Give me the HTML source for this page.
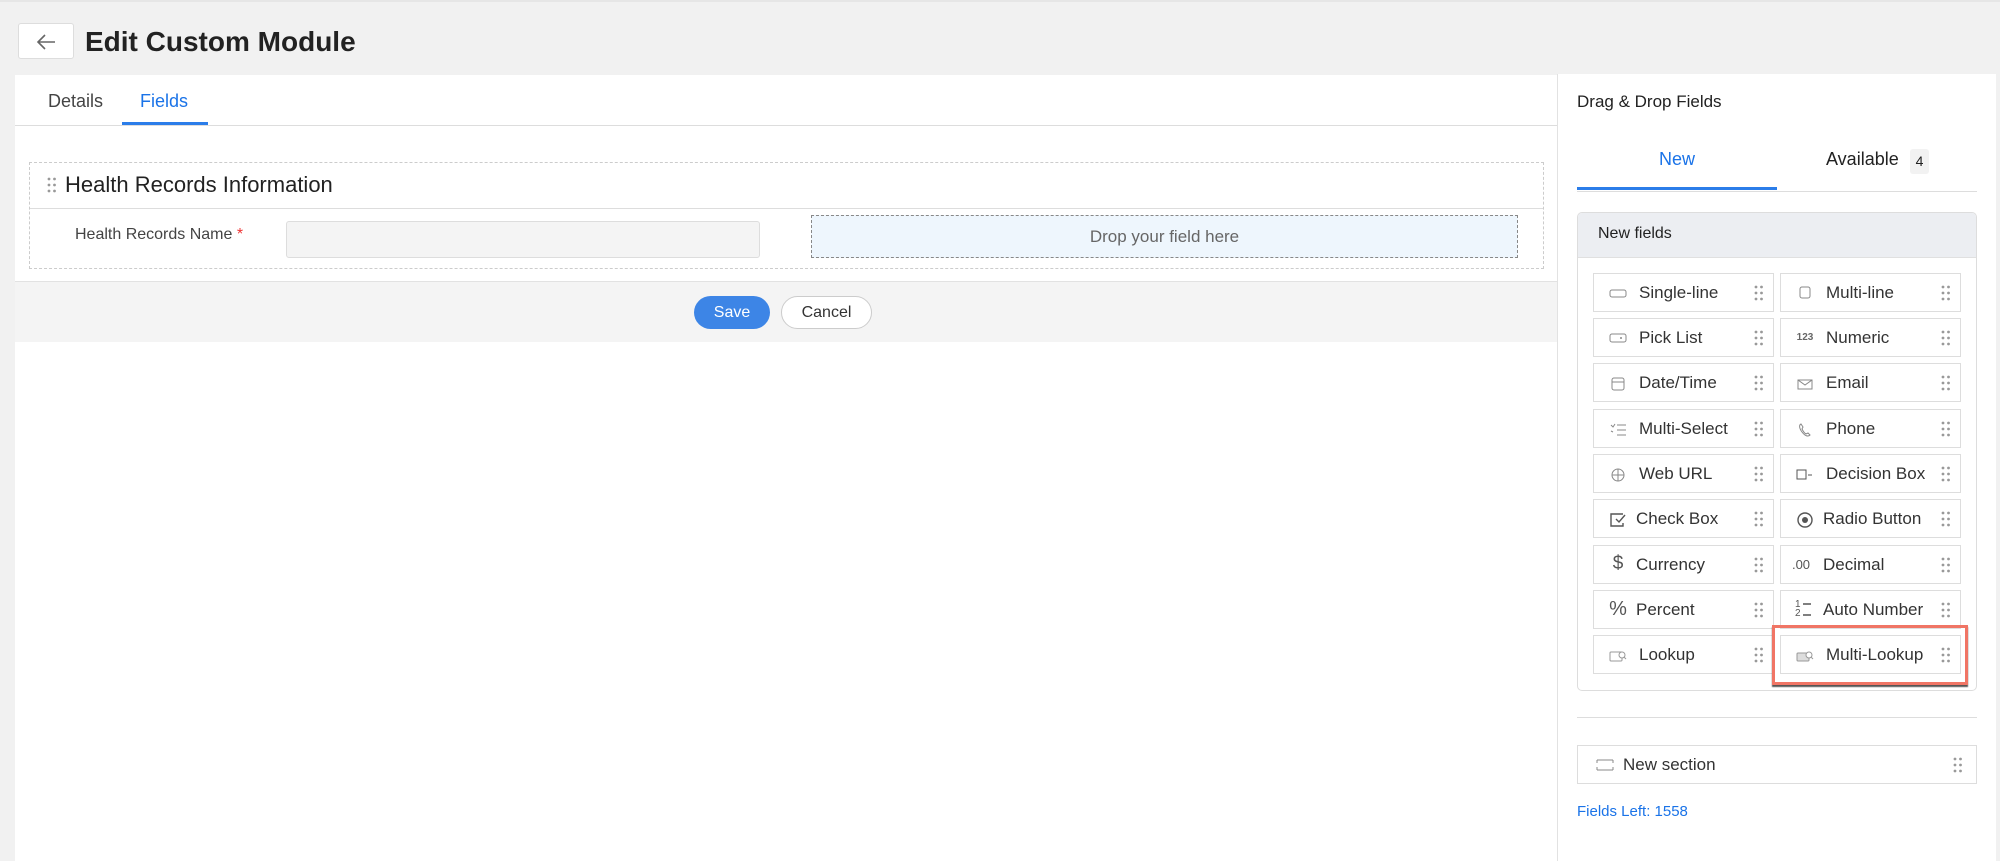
<!DOCTYPE html>
<html><head><meta charset="utf-8"><style>
*{box-sizing:border-box;margin:0;padding:0}
body{width:2000px;height:861px;background:#f1f1f1;font-family:"Liberation Sans",sans-serif;position:relative;overflow:hidden;color:#333}
.a{position:absolute}
.item{position:absolute;width:181px;height:39px;border:1px solid #ddd;background:#fff;font-size:17px;color:#333}
.item .t{position:absolute;left:45px;top:9px;white-space:nowrap}
.item .ic{position:absolute;left:14px;top:10px;width:20px;height:18px;color:#666;font-size:13px;text-align:center}
.dots{position:absolute;width:9px;height:16px}
.item .dots{right:10px;top:11px}
</style></head><body>
<svg width="0" height="0" style="position:absolute"><defs><g id="dd" fill="#999"><circle cx="2" cy="2" r="1.4"/><circle cx="7.5" cy="2" r="1.4"/><circle cx="2" cy="8" r="1.4"/><circle cx="7.5" cy="8" r="1.4"/><circle cx="2" cy="14" r="1.4"/><circle cx="7.5" cy="14" r="1.4"/></g></defs></svg>
<div class="a" style="left:0;top:0;width:2000px;height:2px;background:#e6e6e6"></div>
<div class="a" style="left:18px;top:23px;width:56px;height:36px;background:#fff;border:1px solid #ddd;border-radius:3px">
<svg width="56" height="36" viewBox="0 0 56 36"><path d="M36 18H20M26 11l-7 7 7 7" fill="none" stroke="#666" stroke-width="1.6"/></svg></div>
<div class="a" style="left:85px;top:26px;font-size:28px;font-weight:bold;color:#222">Edit Custom Module</div>

<div class="a" style="left:15px;top:75px;width:1542px;height:786px;background:#fff"></div>
<div class="a" style="left:48px;top:91px;font-size:18px;color:#444">Details</div>
<div class="a" style="left:140px;top:91px;font-size:18px;color:#1a73e8">Fields</div>
<div class="a" style="left:122px;top:122px;width:86px;height:3px;background:#2b7de9"></div>
<div class="a" style="left:15px;top:125px;width:1542px;height:1px;background:#ddd"></div>

<div class="a" style="left:29px;top:162px;width:1515px;height:107px;border:1px dashed #ccc"></div>
<svg class="dots" style="left:47px;top:177px"><use href="#dd"/></svg>
<div class="a" style="left:65px;top:172px;font-size:22px;color:#222">Health Records Information</div>
<div class="a" style="left:30px;top:208px;width:1513px;height:1px;background:#ddd"></div>
<div class="a" style="left:75px;top:226px;font-size:16px;color:#444">Health Records Name <span style="color:#e33">*</span></div>
<div class="a" style="left:286px;top:221px;width:474px;height:37px;background:#f4f4f4;border:1px solid #ddd;border-radius:3px"></div>
<div class="a" style="left:811px;top:215px;width:707px;height:43px;background:#eef6fd;border:1px dashed #888;font-size:17px;color:#666;text-align:center;line-height:41px">Drop your field here</div>

<div class="a" style="left:15px;top:281px;width:1542px;height:61px;background:#f4f4f4;border-top:1px solid #e2e2e2"></div>
<div class="a" style="left:694px;top:296px;width:76px;height:33px;background:#3d85e6;border-radius:17px;color:#fff;font-size:16px;text-align:center;line-height:33px">Save</div>
<div class="a" style="left:781px;top:296px;width:91px;height:33px;background:#fff;border:1px solid #ccc;border-radius:17px;color:#333;font-size:16px;text-align:center;line-height:31px">Cancel</div>

<div class="a" style="left:1557px;top:74px;width:439px;height:787px;background:#fff;border-left:1px solid #e2e2e2"></div>
<div class="a" style="left:1577px;top:92px;font-size:17px;color:#222">Drag &amp; Drop Fields</div>
<div class="a" style="left:1577px;top:149px;width:200px;text-align:center;font-size:18px;color:#1a73e8">New</div>
<div class="a" style="left:1826px;top:149px;font-size:18px;color:#222">Available</div>
<div class="a" style="left:1910px;top:149px;width:19px;height:25px;background:#f2f2f2;border-radius:3px;font-size:14px;text-align:center;line-height:25px;color:#222">4</div>
<div class="a" style="left:1577px;top:191px;width:400px;height:1px;background:#ddd"></div>
<div class="a" style="left:1577px;top:187px;width:200px;height:3px;background:#2b7de9"></div>

<div class="a" style="left:1577px;top:212px;width:400px;height:479px;border:1px solid #ddd;border-radius:5px;overflow:hidden">
<div style="height:45px;background:#eceef2;border-bottom:1px solid #e0e0e0;padding:12px 0 0 20px;font-size:16px;color:#222">New fields</div></div>

<div class="item" style="left:1593px;top:273px"><div class="ic"><svg width="20" height="18"><rect x="2" y="6" width="16" height="7" rx="2" fill="none" stroke="#888"/></svg></div><div class="t">Single-line</div><svg class="dots"><use href="#dd"/></svg></div>
<div class="item" style="left:1780px;top:273px"><div class="ic"><svg width="20" height="18"><rect x="5" y="3" width="10" height="11" rx="2" fill="none" stroke="#888"/></svg></div><div class="t">Multi-line</div><svg class="dots"><use href="#dd"/></svg></div>
<div class="item" style="left:1593px;top:318px"><div class="ic"><svg width="20" height="18"><rect x="2" y="5" width="16" height="8" rx="2" fill="none" stroke="#888"/><circle cx="13" cy="9" r="1" fill="#888"/></svg></div><div class="t">Pick List</div><svg class="dots"><use href="#dd"/></svg></div>
<div class="item" style="left:1780px;top:318px"><div class="ic" style="font-size:10px;font-weight:bold;line-height:18px">123</div><div class="t">Numeric</div><svg class="dots"><use href="#dd"/></svg></div>
<div class="item" style="left:1593px;top:363px"><div class="ic"><svg width="20" height="18"><rect x="4" y="4" width="12" height="12" rx="2" fill="none" stroke="#888"/><path d="M4 8h12" stroke="#888"/></svg></div><div class="t">Date/Time</div><svg class="dots"><use href="#dd"/></svg></div>
<div class="item" style="left:1780px;top:363px"><div class="ic"><svg width="20" height="18"><rect x="3" y="6" width="14" height="9" fill="none" stroke="#888"/><path d="M3 6l7 5 7-5" fill="none" stroke="#888"/></svg></div><div class="t">Email</div><svg class="dots"><use href="#dd"/></svg></div>
<div class="item" style="left:1593px;top:409px"><div class="ic"><svg width="20" height="18"><path d="M9 5h9M9 10h9M9 15h9M3 5l2 2 2-3M3 11l2 1" fill="none" stroke="#888"/></svg></div><div class="t">Multi-Select</div><svg class="dots"><use href="#dd"/></svg></div>
<div class="item" style="left:1780px;top:409px"><div class="ic"><svg width="20" height="18"><path d="M6 4c-2 1-2 4 1 8s6 5 8 3l-2-2-2 1c-2-1-3-3-4-5l1-2z" fill="none" stroke="#888"/></svg></div><div class="t">Phone</div><svg class="dots"><use href="#dd"/></svg></div>
<div class="item" style="left:1593px;top:454px"><div class="ic"><svg width="20" height="18"><circle cx="10" cy="10" r="6" fill="none" stroke="#888"/><path d="M4 10h12M10 4v12" stroke="#888"/></svg></div><div class="t">Web URL</div><svg class="dots"><use href="#dd"/></svg></div>
<div class="item" style="left:1780px;top:454px"><div class="ic"><svg width="20" height="18"><rect x="2" y="5" width="9" height="9" fill="none" stroke="#555"/><path d="M13 10h4" stroke="#555"/></svg></div><div class="t">Decision Box</div><svg class="dots"><use href="#dd"/></svg></div>
<div class="item" style="left:1593px;top:499px"><div class="ic"><svg width="20" height="18"><path d="M15 4H3v12h12v-3" fill="none" stroke="#555" stroke-width="1.4"/><path d="M8 9l3 3 6-7" fill="none" stroke="#555" stroke-width="1.4"/></svg></div><div class="t" style="left:42px">Check Box</div><svg class="dots"><use href="#dd"/></svg></div>
<div class="item" style="left:1780px;top:499px"><div class="ic"><svg width="20" height="18"><circle cx="10" cy="10" r="7" fill="none" stroke="#555" stroke-width="1.4"/><circle cx="10" cy="10" r="3" fill="#555"/></svg></div><div class="t" style="left:42px">Radio Button</div><svg class="dots"><use href="#dd"/></svg></div>
<div class="item" style="left:1593px;top:545px"><div class="ic" style="font-size:19px;color:#555;top:7px">$</div><div class="t" style="left:42px">Currency</div><svg class="dots"><use href="#dd"/></svg></div>
<div class="item" style="left:1780px;top:545px"><div class="ic" style="font-size:13px;color:#555;top:11px;left:10px">.00</div><div class="t" style="left:42px">Decimal</div><svg class="dots"><use href="#dd"/></svg></div>
<div class="item" style="left:1593px;top:590px"><div class="ic" style="font-size:20px;color:#555;top:7px">%</div><div class="t" style="left:42px">Percent</div><svg class="dots"><use href="#dd"/></svg></div>
<div class="item" style="left:1780px;top:590px"><div class="ic" style="font-size:10px;color:#555;line-height:9px;top:9px;text-align:left">1<br>2</div><svg class="a" style="left:20px;top:11px" width="12" height="18"><path d="M2 2h8M2 13h8" stroke="#555" stroke-width="1.5"/></svg><div class="t" style="left:42px">Auto Number</div><svg class="dots"><use href="#dd"/></svg></div>
<div class="item" style="left:1593px;top:635px"><div class="ic"><svg width="20" height="18"><rect x="2" y="6" width="12" height="9" rx="1" fill="none" stroke="#999"/><circle cx="14" cy="9" r="3" fill="#fff" stroke="#999"/><path d="M16 11l2 2" stroke="#999"/></svg></div><div class="t">Lookup</div><svg class="dots"><use href="#dd"/></svg></div>
<div class="a" style="left:1772px;top:625px;width:196px;height:60px;border:3px solid #f07565;box-shadow:0 2px 1px #555"></div>
<div class="item" style="left:1780px;top:635px"><div class="ic"><svg width="20" height="18"><rect x="2" y="7" width="12" height="8" rx="1" fill="#ddd" stroke="#999"/><circle cx="14" cy="9" r="3" fill="#fff" stroke="#999"/><path d="M16 11l2 2" stroke="#999"/></svg></div><div class="t">Multi-Lookup</div><svg class="dots"><use href="#dd"/></svg></div>

<div class="a" style="left:1577px;top:717px;width:400px;height:1px;background:#ddd"></div>
<div class="a" style="left:1577px;top:745px;width:400px;height:39px;border:1px solid #ddd">
<svg class="a" style="left:17px;top:10px" width="20" height="18"><path d="M2 4h16M2 14h16M2 4v3M18 4v3M2 14v-3M18 14v-3" fill="none" stroke="#888"/></svg>
<div class="a" style="left:45px;top:9px;font-size:17px;color:#333">New section</div>
<svg class="dots" style="right:14px;top:11px"><use href="#dd"/></svg></div>
<div class="a" style="left:1577px;top:803px;font-size:15px;color:#1a73e8">Fields Left: 1558</div>
</body></html>
